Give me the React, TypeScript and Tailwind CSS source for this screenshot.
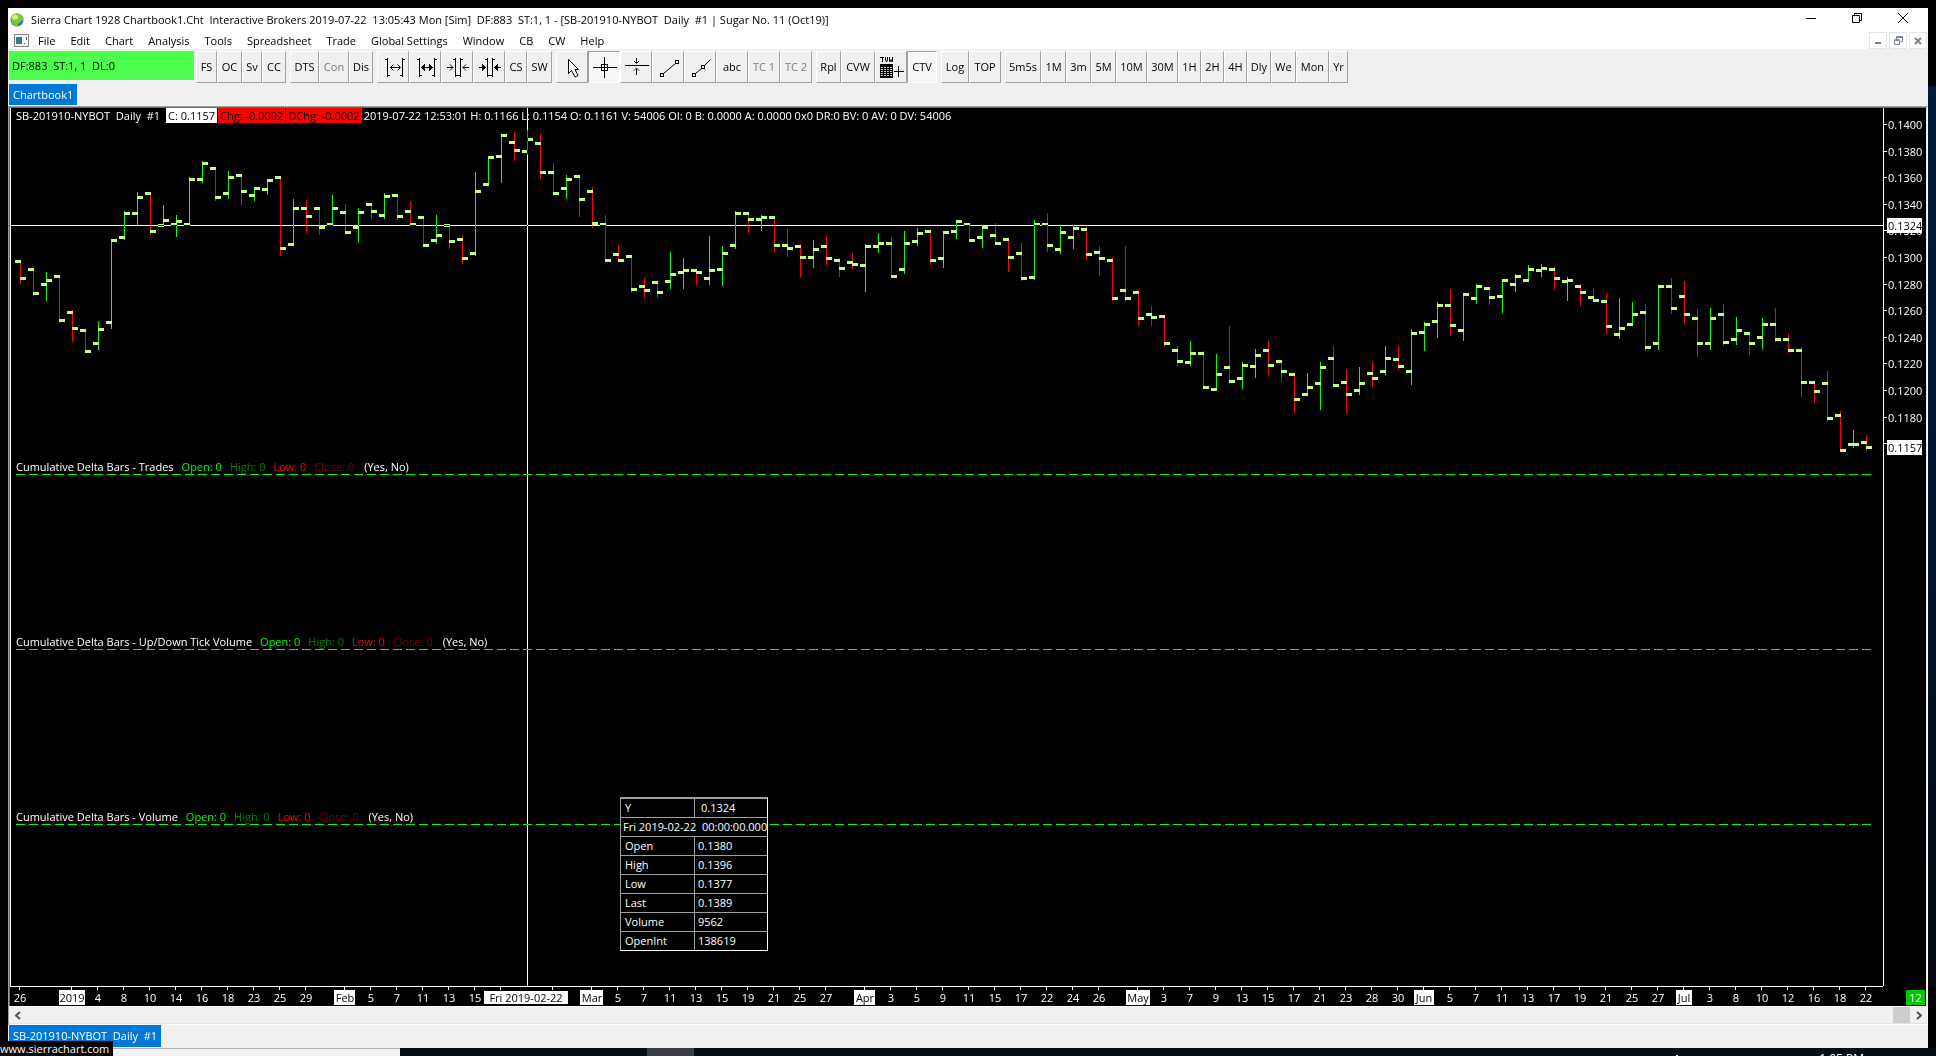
import { useState, type ReactNode } from 'react';

// [open, high, low, close] in plot rows, one entry per trading day
const BARS: [number, number, number, number][] = [
  [153, 152, 176, 170], [161, 160, 188, 185], [176, 164, 193, 172], [168, 167, 214, 212], [204, 202, 234, 220],
  [222, 221, 244, 243], [235, 213, 242, 221], [214, 131, 221, 132], [129, 103, 132, 105], [105, 84, 117, 89],
  [85, 84, 127, 123], [117, 97, 119, 112], [116, 107, 129, 113], [116, 69, 117, 71], [71, 53, 75, 55],
  [60, 59, 93, 89], [85, 63, 91, 69], [67, 66, 97, 83], [87, 79, 93, 80], [81, 71, 87, 72],
  [69, 68, 148, 140], [136, 91, 138, 100], [100, 92, 125, 108], [100, 99, 127, 119], [116, 87, 118, 100],
  [104, 96, 127, 124], [119, 100, 135, 104], [96, 95, 111, 103], [107, 85, 111, 88], [87, 86, 112, 108],
  [103, 93, 119, 116], [109, 108, 139, 137], [132, 107, 136, 127], [117, 116, 141, 133], [131, 127, 156, 150],
  [145, 64, 148, 83], [76, 48, 78, 49], [48, 26, 75, 27], [34, 24, 53, 42], [43, 22, 47, 31],
  [35, 26, 71, 64], [64, 55, 88, 85], [80, 67, 91, 71], [68, 67, 109, 91], [83, 79, 120, 115],
  [116, 107, 154, 152], [146, 137, 153, 152], [148, 147, 185, 181], [178, 170, 190, 182], [174, 173, 190, 184],
  [173, 144, 181, 166], [164, 150, 181, 162], [162, 161, 177, 164], [170, 128, 177, 162], [161, 138, 178, 145],
  [137, 103, 141, 105], [105, 104, 125, 111], [111, 107, 123, 109], [109, 108, 144, 137], [137, 121, 149, 140],
  [138, 136, 169, 149], [149, 132, 160, 141], [138, 128, 158, 150], [152, 150, 169, 160], [154, 145, 161, 156],
  [157, 136, 184, 138], [138, 125, 145, 135], [135, 129, 169, 168], [161, 123, 166, 135], [133, 120, 138, 125],
  [123, 122, 157, 152], [150, 123, 160, 124], [123, 112, 131, 113], [116, 115, 133, 132], [129, 117, 140, 119],
  [127, 115, 136, 135], [131, 130, 164, 149], [145, 135, 173, 170], [169, 112, 172, 116], [116, 105, 144, 137],
  [141, 117, 146, 124], [129, 117, 141, 120], [121, 117, 152, 146], [144, 138, 168, 150], [152, 150, 193, 190],
  [182, 138, 194, 190], [184, 182, 218, 210], [206, 198, 218, 209], [208, 207, 239, 235], [242, 238, 258, 253],
  [254, 233, 258, 245], [245, 243, 281, 279], [281, 246, 283, 266], [259, 218, 274, 273], [270, 254, 281, 257],
  [258, 241, 270, 247], [242, 233, 267, 257], [253, 252, 274, 263], [266, 265, 305, 291], [286, 265, 288, 279],
  [275, 254, 302, 259], [250, 238, 279, 277], [274, 261, 306, 286], [282, 259, 287, 275], [265, 254, 279, 270],
  [263, 238, 267, 250], [251, 238, 262, 258], [263, 221, 277, 225], [224, 214, 243, 216], [213, 194, 230, 197],
  [197, 181, 228, 217], [222, 185, 233, 186], [190, 176, 196, 178], [180, 179, 197, 189], [188, 171, 205, 172],
  [176, 166, 184, 168], [172, 157, 174, 161], [162, 156, 169, 160], [161, 158, 182, 170], [173, 169, 193, 172],
  [178, 176, 198, 184], [189, 181, 194, 192], [193, 186, 226, 218], [226, 190, 231, 220], [216, 194, 218, 206],
  [204, 196, 243, 239], [235, 177, 242, 178], [178, 170, 206, 200], [188, 173, 216, 206], [210, 201, 249, 235],
  [235, 200, 242, 210], [206, 196, 238, 234], [231, 209, 237, 222], [225, 224, 247, 235], [229, 210, 241, 216],
  [216, 200, 234, 231], [231, 226, 245, 242], [242, 239, 289, 274], [274, 273, 295, 283], [275, 263, 314, 310],
  [307, 303, 344, 342], [336, 322, 340, 336], [334, 327, 343, 339],
];

const BAR_STEP = 13;
const barX = (i: number) => 9 + i * BAR_STEP;
const CURSOR_BAR = 39;
const CURSOR_Y = 117;

const PRICES = ['0.1400', '0.1380', '0.1360', '0.1340', '0.1320', '0.1300', '0.1280', '0.1260', '0.1240', '0.1220', '0.1200', '0.1180', '0.1160'];
const priceY = (i: number) => Math.round(16 + i * 26.6);

// bar index, label and, for month starts, the width of the highlighted box
const DATES: [number, string, number?][] = [
  [0, '26'], [4, '2019', 26], [6, '4'], [8, '8'], [10, '10'], [12, '14'], [14, '16'], [16, '18'], [18, '23'], [20, '25'], [22, '29'],
  [25, 'Feb', 21], [27, '5'], [29, '7'], [31, '11'], [33, '13'], [35, '15'], [37, ''], [41, ''],
  [44, 'Mar', 23], [46, '5'], [48, '7'], [50, '11'], [52, '13'], [54, '15'], [56, '19'], [58, '21'], [60, '25'], [62, '27'],
  [65, 'Apr', 21], [67, '3'], [69, '5'], [71, '9'], [73, '11'], [75, '15'], [77, '17'], [79, '22'], [81, '24'], [83, '26'],
  [86, 'May', 24], [88, '3'], [90, '7'], [92, '9'], [94, '13'], [96, '15'], [98, '17'], [100, '21'], [102, '23'], [104, '28'], [106, '30'],
  [108, 'Jun', 20], [110, '5'], [112, '7'], [114, '11'], [116, '13'], [118, '17'], [120, '19'], [122, '21'], [124, '25'], [126, '27'],
  [128, 'Jul', 16], [130, '3'], [132, '8'], [134, '10'], [136, '12'], [138, '16'], [140, '18'], [142, '22'],
];

const MENU = ['File', 'Edit', 'Chart', 'Analysis', 'Tools', 'Spreadsheet', 'Trade', 'Global Settings', 'Window', 'CB', 'CW', 'Help'];

const STUDIES = ['Cumulative Delta Bars - Trades', 'Cumulative Delta Bars - Up/Down Tick Volume', 'Cumulative Delta Bars - Volume'];

const READOUT = [
  ['Open', '0.1380'],
  ['High', '0.1396'],
  ['Low', '0.1377'],
  ['Last', '0.1389'],
  ['Volume', '9562'],
  ['OpenInt', '138619'],
];

function Icon({ children }: { children: ReactNode }) {
  return (
    <svg width="30" height="30" viewBox="0 0 30 30" fill="none" stroke="#000" shapeRendering="crispEdges">
      {children}
    </svg>
  );
}

function WidenIcon({ bold }: { bold?: boolean }) {
  return (
    <Icon>
      <path d="M9.5 6v19M7 7.5h2M10 23.5h2M24.5 6v19M22 23.5h2M25 7.5h2" />
      <path d="M12 15.5h10" />
      {bold ? (
        <path d="M11 15.5l4-4v8zM23 15.5l-4-4v8z" fill="#000" stroke="none" />
      ) : (
        <path d="M15.5 12.5l-3 3l3 3M19.5 12.5l3 3l-3 3" shapeRendering="auto" />
      )}
    </Icon>
  );
}

function NarrowIcon({ bold }: { bold?: boolean }) {
  return (
    <Icon>
      <path d="M13.5 6v19M11 7.5h2M14 23.5h2M18.5 6v19M16 23.5h2M19 7.5h2" />
      <path d="M5 15.5h6M21 15.5h6" />
      {bold ? (
        <path d="M12 15.5l-4-4v8zM20 15.5l4-4v8z" fill="#000" stroke="none" />
      ) : (
        <path d="M8 12.5l3 3l-3 3M24 12.5l-3 3l3 3" shapeRendering="auto" />
      )}
    </Icon>
  );
}

const PointerIcon = () => (
  <Icon>
    <path d="M11.5 7.500v14l3-3l3.500 6.500l3-1.500l-3-6h3.500z" fill="#fff" shapeRendering="auto" />
  </Icon>
);

const CrosshairIcon = () => (
  <Icon>
    <path d="M4 15.5h24M15.5 5v21M12.5 12.5h6v6h-6z" />
  </Icon>
);

const HLineIcon = () => (
  <Icon>
    <path d="M4 13.5h24M15.5 6v5M15.5 17v6" />
    <path d="M13 9l2.500 2.500l2.500-2.500M13 18.500l2.500-2.500l2.500 2.500" shapeRendering="auto" />
  </Icon>
);

const LineIcon = () => (
  <Icon>
    <path d="M7.5 21.5h3v3h-3zM22.5 8.5h3v3h-3z" />
    <path d="M10.5 21.5l12-10" shapeRendering="auto" />
  </Icon>
);

const RayIcon = () => (
  <Icon>
    <path d="M7.5 21.5h3v3h-3zM16.5 13.5h3v3h-3z" />
    <path d="M10.5 21.5l6-5M19.5 13.5l6-6" shapeRendering="auto" />
  </Icon>
);

const ValuesIcon = () => (
  <Icon>
    <path d="M4 5.500h4M6 6v4" />
    <path d="M9.500 5v3l1 2l1-2v-3M13.500 5v4.500h1l.5-2l.5 2h1v-4.500" shapeRendering="auto" />
    <path d="M4 12h13v14h-13z" fill="#000" stroke="none" />
    <path d="M5 15.500h11M5 17.500h11M5 19.500h11M5 21.500h11M5 23.500h11" stroke="#ccc" strokeDasharray="2 1" />
    <path d="M18 19.500h10M22.500 14v11" />
  </Icon>
);

type Tool = { label: string; w: string; icon?: ReactNode; disabled?: boolean };

const TOOL_GROUPS: Tool[][] = [
  [
    { label: 'FS', w: 'w-[21px]' },
    { label: 'OC', w: 'w-[25px]' },
    { label: 'Sv', w: 'w-[20px]' },
    { label: 'CC', w: 'w-[24px]' },
  ],
  [
    { label: 'DTS', w: 'w-[29px]' },
    { label: 'Con', w: 'w-[30px]', disabled: true },
    { label: 'Dis', w: 'w-[24px]' },
  ],
  [
    { label: 'Increase spacing', w: 'w-[32px]', icon: <WidenIcon /> },
    { label: 'Increase bar width', w: 'w-[32px]', icon: <WidenIcon bold /> },
    { label: 'Decrease spacing', w: 'w-[32px]', icon: <NarrowIcon /> },
    { label: 'Decrease bar width', w: 'w-[32px]', icon: <NarrowIcon bold /> },
    { label: 'CS', w: 'w-[22px]' },
    { label: 'SW', w: 'w-[25px]' },
  ],
  [
    { label: 'Pointer', w: 'w-[32px]', icon: <PointerIcon /> },
    { label: 'Crosshair', w: 'w-[32px]', icon: <CrosshairIcon /> },
    { label: 'Horizontal line', w: 'w-[32px]', icon: <HLineIcon /> },
    { label: 'Line', w: 'w-[32px]', icon: <LineIcon /> },
    { label: 'Ray', w: 'w-[32px]', icon: <RayIcon /> },
    { label: 'abc', w: 'w-[32px]' },
    { label: 'TC 1', w: 'w-[32px]', disabled: true },
    { label: 'TC 2', w: 'w-[32px]', disabled: true },
  ],
  [
    { label: 'Rpl', w: 'w-[25px]' },
    { label: 'CVW', w: 'w-[34px]' },
    { label: 'Tool values window', w: 'w-[32px]', icon: <ValuesIcon /> },
    { label: 'CTV', w: 'w-[30px]' },
  ],
  [
    { label: 'Log', w: 'w-[28px]' },
    { label: 'TOP', w: 'w-[32px]' },
  ],
  [
    { label: '5m5s', w: 'w-[36px]' },
    { label: '1M', w: 'w-[25px]' },
    { label: '3m', w: 'w-[25px]' },
    { label: '5M', w: 'w-[25px]' },
    { label: '10M', w: 'w-[31px]' },
    { label: '30M', w: 'w-[31px]' },
    { label: '1H', w: 'w-[23px]' },
    { label: '2H', w: 'w-[23px]' },
    { label: '4H', w: 'w-[23px]' },
    { label: 'Dly', w: 'w-[24px]' },
    { label: 'We', w: 'w-[25px]' },
    { label: 'Mon', w: 'w-[33px]' },
    { label: 'Yr', w: 'w-[19px]' },
  ],
];

function ToolButton({ tool, pressed, onClick }: { tool: Tool; pressed: boolean; onClick: () => void }) {
  return (
    <button
      type="button"
      aria-label={tool.label}
      disabled={tool.disabled}
      onClick={onClick}
      className={`flex h-8 shrink-0 items-center justify-center whitespace-nowrap border ${tool.w} ${
        pressed ? 'border-t-[#a0a0a0] border-l-[#a0a0a0] border-r-white border-b-white bg-[#f7f7f7]' : 'border-t-white border-l-white border-r-[#a0a0a0] border-b-[#a0a0a0]'
      } ${tool.disabled ? 'text-[#7a7a7a]' : 'text-black'}`}
    >
      {tool.icon ?? tool.label}
    </button>
  );
}

function TitleBar() {
  return (
    <header className="flex h-6 items-center bg-white pl-[2px]">
      <svg width="14" height="16" viewBox="0 0 14 16" className="mr-[7px]">
        <circle cx="7" cy="8" r="6.500" fill="#2f6fae" />
        <path d="M1 5C2 2 5 1 8 1.500C11 2 13 4 13.500 7C12 10 11 9 9 11C8 13 8 14 6 14C3 13 1 10 1 5z" fill="#7fc52f" />
        <path d="M4 3c2-1 4 0 4 2s-3 4-5 2s-1-3 1-4z" fill="#d8f08a" />
      </svg>
      <h1 className="flex-1 whitespace-pre">
        Sierra Chart 1928 Chartbook1.Cht  Interactive Brokers 2019-07-22  13:05:43 Mon [Sim]  DF:883  ST:1, 1 - [SB-201910-NYBOT  Daily  #1 | Sugar No. 11 (Oct19)]
      </h1>
      <div className="flex h-full pr-[2px] pb-1">
        <button type="button" aria-label="Minimize" className="flex w-[46px] items-center justify-center">
          <svg width="10" height="10" stroke="#000"><path d="M0 5.500h10" /></svg>
        </button>
        <button type="button" aria-label="Restore" className="flex w-[46px] items-center justify-center">
          <svg width="10" height="10" fill="none" stroke="#000"><path d="M.5 2.500h7v7h-7zM2.500 2.500v-2h7v7h-2" /></svg>
        </button>
        <button type="button" aria-label="Close" className="flex w-[46px] items-center justify-center">
          <svg width="10" height="10" stroke="#000"><path d="M0 0l10 10M10 0l-10 10" /></svg>
        </button>
      </div>
    </header>
  );
}

function MenuBar() {
  return (
    <nav className="flex h-[17px] items-center bg-white pl-[6px]">
      <svg width="16" height="13" className="mr-px">
        <rect x=".5" y=".5" width="14" height="12" fill="#f4f4f4" stroke="#888" />
        <rect x="2" y="3" width="6" height="7" fill="#3a7a8c" />
        <path d="M10.500 9v1M12.500 3v3" stroke="#555" />
      </svg>
      <div className="flex gap-px">
        {MENU.map((item) => (
          <button key={item} type="button" className="px-[7px]">{item}</button>
        ))}
      </div>
      <div className="ml-auto flex gap-[2px] pr-px">
        <button type="button" aria-label="Minimize chart" className="flex h-[17px] w-[18px] items-center justify-center border border-[#e4e4e4]">
          <svg width="8" height="8"><rect x="1" y="5" width="6" height="2" fill="#7a8494" /></svg>
        </button>
        <button type="button" aria-label="Restore chart" className="flex h-[17px] w-[18px] items-center justify-center border border-[#e4e4e4]">
          <svg width="9" height="9" fill="none" stroke="#7a8494"><path d="M.5 4.500h5v4h-5zM.5 3.500h5M2.500 3v-2.500h6v5h-2M2.500 1.500h6" /></svg>
        </button>
        <button type="button" aria-label="Close chart" className="flex h-[17px] w-[18px] items-center justify-center border border-[#e4e4e4]">
          <svg width="8" height="8" stroke="#7a8494" strokeWidth="2"><path d="M1 1l6 6M7 1l-6 6" /></svg>
        </button>
      </div>
    </nav>
  );
}

function PriceBars() {
  return (
    <svg className="absolute inset-0 h-full w-full" shapeRendering="crispEdges">
      {BARS.map(([open, high, low, close], i) => {
        const x = barX(i);
        return (
          <g key={i}>
            <rect x={x} y={high} width="1" height={low - high} fill={close > open ? '#ff0000' : '#00ff00'} />
            <rect x={x - 5} y={open - 1} width="6" height="3" fill="#c0ff80" />
            <rect x={x} y={close - 1} width="6" height="3" fill="#c0ff80" />
          </g>
        );
      })}
    </svg>
  );
}

function Crosshair() {
  return (
    <>
      <div className="pointer-events-none absolute inset-x-0 h-px bg-white mix-blend-difference" style={{ top: CURSOR_Y }} />
      <div className="pointer-events-none absolute inset-y-0 w-px bg-white mix-blend-difference" style={{ left: barX(CURSOR_BAR) }} />
    </>
  );
}

function StudyPane({ name }: { name: string }) {
  return (
    <section className="h-[175px]">
      <p className="flex h-[15px] gap-2 pl-[5px] leading-4">
        <span>{name}</span>
        <span className="text-[#00ff00]">Open: 0</span>
        <span className="text-[#008000]">High: 0</span>
        <span className="text-[#ff0000]">Low: 0</span>
        <span className="text-[#800000]">Close: 0</span>
        <span className="pl-[2px]">(Yes, No)</span>
      </p>
      <div className="pr-3 pl-[5px]">
        <svg className="block h-px w-full">
          <line x1="0" x2="100%" y1=".5" y2=".5" stroke="#00ff00" strokeDasharray="9 4" />
        </svg>
      </div>
    </section>
  );
}

function ReadoutTable() {
  return (
    <table className="absolute top-[689px] left-[609px] w-[148px] border-separate border-spacing-0 border-t border-r border-b border-l border-t-[#a0a0a0] border-r-white border-b-white border-l-[#a0a0a0] bg-black text-left">
      <tbody>
        <tr className="h-[19px]">
          <th scope="row" className="w-[74px] border-t border-r border-[#a0a0a0] pl-1 font-normal">Y</th>
          <td className="border-t border-[#a0a0a0] pl-[6px]">0.1324</td>
        </tr>
        <tr className="h-[19px]">
          <td colSpan={2} className="border-t border-[#a0a0a0] pl-[2px] whitespace-pre">Fri 2019-02-22  00:00:00.000</td>
        </tr>
        {READOUT.map(([label, value]) => (
          <tr key={label} className="h-[19px]">
            <th scope="row" className="border-t border-r border-[#a0a0a0] pl-1 font-normal">{label}</th>
            <td className="border-t border-[#a0a0a0] pl-[3px]">{value}</td>
          </tr>
        ))}
      </tbody>
    </table>
  );
}

function PriceScale() {
  return (
    <svg className="h-full w-[43px] border-l border-white" fill="#fff">
      {PRICES.map((price, i) => (
        <g key={price}>
          <rect x="0" y={priceY(i)} width="3" height="1" />
          <text x="4" y={priceY(i) + 5}>{price}</text>
        </g>
      ))}
      <rect x="3" y="110" width="35" height="15" />
      <text x="4" y="122" fill="#000">0.1324</text>
      <rect x="3" y="332" width="35" height="15" />
      <text x="4" y="344" fill="#000">0.1157</text>
    </svg>
  );
}

function TimeScale() {
  return (
    <svg className="h-5 min-w-0 flex-1 border-t border-white" fill="#fff" textAnchor="middle">
      {DATES.map(([bar, label, box]) => {
        const x = barX(bar) + 1;
        return (
          <g key={bar}>
            <rect x={x - 1} y="0" width="1" height="3" />
            {box && <rect x={x - Math.round(box / 2)} y="3" width={box} height="15" />}
            <text x={x} y="15" fill={box ? '#000' : '#fff'}>{label}</text>
          </g>
        );
      })}
      <rect x={barX(CURSOR_BAR) - 42} y="4" width="84" height="13" />
      <text x={barX(CURSOR_BAR)} y="15" fill="#000">Fri 2019-02-22</text>
    </svg>
  );
}

export default function App() {
  const [pressed, setPressed] = useState(['Crosshair', 'CTV']);

  const toggle = (label: string) =>
    setPressed((list) => (list.includes(label) ? list.filter((l) => l !== label) : [...list, label]));

  return (
    <div className="relative flex min-h-screen flex-col overflow-hidden bg-black font-['Open_Sans',sans-serif] text-[11px] leading-4 text-black">
      <div className="flex flex-1">
        <div className="w-2 shrink-0" />

        <main className="mt-2 flex min-w-0 flex-1 flex-col bg-[#f0f0f0]">
          <TitleBar />
          <MenuBar />

          {/* Toolbar */}
          <div className="flex items-start pt-[2px] pl-px">
            <div className="mr-[2px] flex h-[29px] w-[185px] items-center bg-[#4cff4c] pl-[3px] whitespace-pre">DF:883  ST:1, 1  DL:0</div>
            <div className="flex gap-1">
              {TOOL_GROUPS.map((group, g) => (
                <div key={g} className="flex">
                  {group.map((tool) => (
                    <ToolButton key={tool.label} tool={tool} pressed={pressed.includes(tool.label)} onClick={() => toggle(tool.label)} />
                  ))}
                </div>
              ))}
            </div>
          </div>
          <div className="flex h-[23px] pt-px pl-px">
            <button type="button" className="h-[21px] bg-[#0078d7] px-1 text-white">Chartbook1</button>
          </div>

          {/* Chart */}
          <div className="flex flex-1 flex-col border-t border-r border-l border-t-[#a0a0a0] border-r-white border-l-[#a0a0a0]">
            <div className="flex flex-1 flex-col border-t border-r border-l border-t-[#696969] border-r-[#e3e3e3] border-l-[#696969] bg-black text-white">
              <div className="flex flex-1">
                <div className="relative min-w-0 flex-1 border-l border-white">
                  <PriceBars />
                  <div className="relative">
                    <section className="h-[351px]">
                      <div className="flex h-[15px] items-center pl-[5px] whitespace-pre">
                        <span className="mr-[6px]">SB-201910-NYBOT  Daily  #1</span>
                        <span className="mr-px bg-white px-[2px] leading-[15px] text-black">C: 0.1157</span>
                        <span className="mr-px bg-[#ff0000] px-[2px] leading-[15px] text-black">Chg: -0.0002</span>
                        <span className="mr-px bg-[#ff0000] px-[2px] leading-[15px] text-black">DChg: -0.0002</span>
                        <span className="pl-px">2019-07-22 12:53:01 H: 0.1166 L: 0.1154 O: 0.1161 V: 54006 OI: 0 B: 0.0000 A: 0.0000 0x0 DR:0 BV: 0 AV: 0 DV: 54006</span>
                      </div>
                    </section>
                    {STUDIES.map((name) => <StudyPane key={name} name={name} />)}
                  </div>
                  <Crosshair />
                  <ReadoutTable />
                </div>
                <PriceScale />
              </div>
              <div className="flex">
                <TimeScale />
                <div className="flex w-[43px] justify-end pt-1 pr-px">
                  <span className="h-[15px] w-[19px] bg-[#00c800] text-center leading-[15px]">12</span>
                </div>
              </div>
            </div>
            {/* Scroll bar */}
            <div className="flex h-[17px] items-stretch border-t border-white">
              <button type="button" aria-label="Scroll left" className="flex w-[17px] items-center justify-center">
                <svg width="6" height="9" fill="none" stroke="#505050" strokeWidth="2"><path d="M5 1l-4 3.500l4 3.500" /></svg>
              </button>
              <div className="flex flex-1 justify-end"><div className="w-[17px] bg-[#cdcdcd]" /></div>
              <button type="button" aria-label="Scroll right" className="flex w-[17px] items-center justify-center">
                <svg width="6" height="9" fill="none" stroke="#505050" strokeWidth="2"><path d="M1 1l4 3.500l-4 3.500" /></svg>
              </button>
            </div>
            <div className="h-[2px] border-t border-b border-t-[#e3e3e3] border-b-white" />
          </div>
          <div className="flex h-[23px] pl-px">
            <button type="button" className="h-[22px] bg-[#0078d7] px-1 whitespace-pre text-white">SB-201910-NYBOT  Daily  #1</button>
          </div>
        </main>

        <div className="flex w-2 shrink-0 flex-col">
          <div className="h-[86px]" />
          <div className="flex-1 bg-linear-to-b from-[#001c38] via-[#00152c] to-[#05080e]" />
          <div className="h-[62px]" />
        </div>
      </div>

      {/* Taskbar */}
      <footer className="flex h-2 overflow-hidden bg-[#070d14] text-[12px] text-white">
        <div className="w-[400px] border-t border-[#b0b0b0] bg-[#f2f2f2]" />
        <div className="ml-[247px] w-[47px] bg-[#3a3d42]" />
        <svg width="8" height="8" className="ml-auto" fill="none" stroke="#fff"><path d="M1 10l3-3l3 3" /></svg>
        <time className="mr-[72px] ml-[138px] pt-[3px]">1:05 PM</time>
      </footer>
      <a href="#" className="absolute bottom-0 left-0 h-[15px] bg-black pr-1 leading-4 text-white">www.sierrachart.com</a>
    </div>
  );
}
